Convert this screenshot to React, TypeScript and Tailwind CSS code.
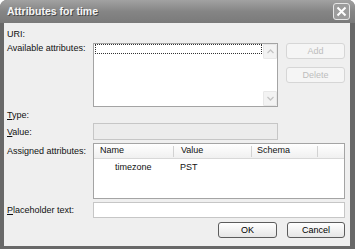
import React from 'react';

function XpButton({ label, disabled, width, accel }: { label: string; disabled?: boolean; width: string; accel?: boolean }) {
  return (
    <div
      className={
        disabled
          ? `${width} h-[16px] rounded-[3px] border border-[#d6d6d6] bg-[#f5f5f5] text-[#bdbdbd] flex items-center justify-center leading-none`
          : `${width} h-[16px] rounded-[3px] border border-[#5c5c5c] bg-gradient-to-b from-[#ffffff] to-[#e6e6e6] text-black flex items-center justify-center leading-none`
      }
    >
      {accel ? <span>{label}</span> : label}
    </div>
  );
}

function ScrollArrow({ up }: { up?: boolean }) {
  return (
    <div className="h-[15px] w-[14px] bg-[#f3f3f3] border border-[#e8e8e8] rounded-[1px] flex items-center justify-center">
      <svg width="7" height="5" viewBox="0 0 7 5">
        <path d={up ? 'M0.5 4 L3.5 1 L6.5 4' : 'M0.5 1 L3.5 4 L6.5 1'} fill="none" stroke="#c4c4c4" strokeWidth="1.3" />
      </svg>
    </div>
  );
}

export default function App() {
  return (
    <div className="w-[355px] h-[249px] bg-white font-['Liberation_Sans',Arial,sans-serif]">
      <div className="w-[355px] h-[249px] bg-[#686868] rounded-t-[7px] flex flex-col overflow-hidden">
        {/* Title bar */}
        <div className="h-[23px] shrink-0 bg-gradient-to-b from-[#a2a2a2] via-[#858585] to-[#7a7a7a] flex items-center pl-[7px] pr-[3px]">
          <span className="text-[10.5px] font-bold text-[#f6f6f6] [text-shadow:1px_1px_0_#4a4a4a] flex-1">
            Attributes for time
          </span>
          <div className="w-[17px] h-[17px] rounded-[3px] border border-[#e6e6e6] bg-[#9c9c9c] flex items-center justify-center mr-[2px]">
            <svg width="11" height="11" viewBox="0 0 11 11">
              <path d="M1.5 1.5 L9.5 9.5 M9.5 1.5 L1.5 9.5" stroke="#ffffff" strokeWidth="2" />
            </svg>
          </div>
        </div>

        {/* Body */}
        <div className="flex-1 ml-[4px] mr-[5px] mb-[3px] bg-[#efefef] pl-[3px] pr-[5px] text-[9px] text-[#111] flex flex-col">
          <div className="mt-[5px] h-[12px] leading-[12px]">URI:</div>

          <div className="mt-[3px] flex">
            <div className="w-[86px] -mt-[1px] leading-[12px]">Available attributes:</div>
            <div className="w-[185px] h-[64px] border border-[#a4a4a4] bg-white flex">
              <div className="flex-1">
                <div className="mx-[1px] h-[10px] border border-dotted border-[#333]" />
              </div>
              <div className="w-[14px] flex flex-col justify-between">
                <ScrollArrow up />
                <ScrollArrow />
              </div>
            </div>
            <div className="ml-[8px] flex flex-col gap-[8px]">
              <XpButton label="Add" disabled width="w-[59px]" />
              <XpButton label="Delete" disabled width="w-[59px]" />
            </div>
          </div>

          <div className="mt-[2px] h-[12px] leading-[12px]">
            <span className="underline">T</span>ype:
          </div>

          <div className="mt-[2px] flex items-center">
            <div className="w-[86px] leading-[12px]">
              <span className="underline">V</span>alue:
            </div>
            <div className="w-[185px] h-[17px] border border-[#c6c6c6] bg-[#ececec]" />
          </div>

          <div className="mt-[3px] flex">
            <div className="w-[86px] pt-[2px] leading-[12px]">Assigned attributes:</div>
            <div className="w-[252px] h-[56px] border border-[#a4a4a4] bg-white flex flex-col">
              <div className="h-[15px] flex items-center bg-gradient-to-b from-[#ffffff] to-[#f0f0f0] border-b border-[#d8d8d8]">
                <div className="w-[80px] pl-[6px] flex items-center justify-between">
                  <span>Name</span>
                  <span className="w-px h-[11px] bg-[#d2d2d2]" />
                </div>
                <div className="w-[78px] pl-[7px] flex items-center justify-between">
                  <span>Value</span>
                  <span className="w-px h-[11px] bg-[#d2d2d2]" />
                </div>
                <div className="w-[66px] pl-[5px] flex items-center justify-between">
                  <span>Schema</span>
                  <span className="w-px h-[11px] bg-[#d2d2d2]" />
                </div>
              </div>
              <div className="mt-[2px] h-[14px] flex items-center">
                <div className="w-[80px] pl-[21px]">timezone</div>
                <div className="w-[78px] pl-[6px]">PST</div>
              </div>
            </div>
          </div>

          <div className="mt-[3px] flex items-center">
            <div className="w-[86px] leading-[12px]">
              <span className="underline">P</span>laceholder text:
            </div>
            <div className="w-[252px] h-[16px] border border-[#c6c6c6] bg-white" />
          </div>

          <div className="mt-[4px] flex justify-end gap-[10px]">
            <XpButton label="OK" width="w-[59px]" />
            <XpButton label="Cancel" width="w-[58px]" />
          </div>
        </div>
      </div>
    </div>
  );
}
